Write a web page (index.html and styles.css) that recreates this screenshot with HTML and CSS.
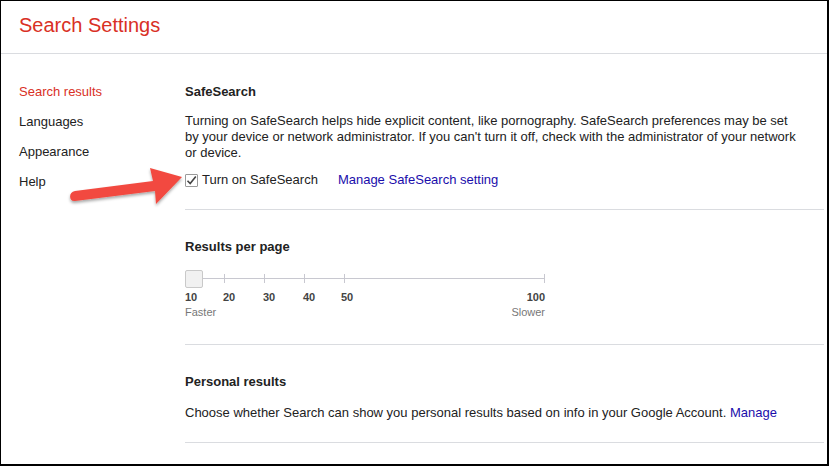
FILE: index.html
```html
<!DOCTYPE html>
<html lang="en">
<head>
    <meta charset="UTF-8">
    <title>Search Settings</title>
    <link rel="stylesheet" href="styles.css">
</head>
<body>

<div class="frame">
    <div class="header">
        <h1>Search Settings</h1>
    </div>

    <div class="layout">
        <!-- Menú lateral -->
        <ul class="nav">
            <li class="active">Search results</li>
            <li>Languages</li>
            <li>Appearance</li>
            <li>Help</li>
        </ul>

        <div class="main">
            <div class="section first">
                <h2>SafeSearch</h2>
                <p>Turning on SafeSearch helps hide explicit content, like pornography. SafeSearch preferences may be set by your device or network administrator. If you can't turn it off, check with the administrator of your network or device.</p>
                <div class="check-row">
                    <label class="check">
                        <span class="box">
                            <svg width="11" height="11" viewBox="0 0 11 11"><path d="M1.5 5.8 L4.2 8.6 L9.8 1.6" fill="none" stroke="#444" stroke-width="1.6"/></svg>
                        </span>
                        Turn on SafeSearch
                    </label>
                    <a href="#">Manage SafeSearch setting</a>
                </div>
            </div>

            <div class="section second">
                <h2>Results per page</h2>
                <div class="slider">
                    <div class="track"></div>
                    <span class="tick" style="left: 39px"></span>
                    <span class="tick" style="left: 79px"></span>
                    <span class="tick" style="left: 119px"></span>
                    <span class="tick" style="left: 159px"></span>
                    <span class="tick" style="left: 359px"></span>
                    <div class="thumb"></div>
                </div>
                <div class="slider-labels">
                    <span style="left: 0">10</span>
                    <span style="left: 38px">20</span>
                    <span style="left: 78px">30</span>
                    <span style="left: 118px">40</span>
                    <span style="left: 156px">50</span>
                    <span class="last">100</span>
                </div>
                <div class="slider-ends">
                    <span>Faster</span>
                    <span>Slower</span>
                </div>
            </div>

            <div class="section third">
                <h2>Personal results</h2>
                <p>Choose whether Search can show you personal results based on info in your Google Account. <a href="#">Manage</a></p>
            </div>
        </div>
    </div>

    <!-- Flecha de anotación -->
    <svg class="arrow" width="130" height="56" viewBox="0 0 130 56">
        <defs>
            <filter id="sh" x="-20%" y="-40%" width="140%" height="180%">
                <feDropShadow dx="0" dy="2" stdDeviation="1.6" flood-color="#000" flood-opacity="0.35"/>
            </filter>
        </defs>
        <path filter="url(#sh)" fill="#f24a3f" d="M12 32 L90 22 L87 9 L119 18 L93 45 L92 32 L12 42 C6 43 5 33 12 32 Z"/>
    </svg>
</div>

</body>
</html>
```

FILE: styles.css
```css
body { margin: 0; font-family: "Liberation Sans", Arial, sans-serif; color: #222; background: #fff; }
.frame { position: relative; width: 829px; height: 466px; box-sizing: border-box; border-top: 1px solid #000; border-left: 1px solid #000; border-right: 2px solid #000; border-bottom: 2px solid #000; overflow: hidden; }

.header { height: 52px; border-bottom: 1px solid #dadce0; }
.header h1 { margin: 0; padding: 12px 0 0 18px; font-size: 20px; font-weight: normal; line-height: 24px; color: #d93025; }

.layout { display: flex; }
.nav { list-style: none; margin: 0; padding: 23px 0 0 18px; width: 166px; }
.nav li { font-size: 13px; line-height: 30px; height: 30px; }
.nav li.active { color: #d93025; }

.main { flex: 1; margin-right: 3px; }
.section { border-bottom: 1px solid #dadce0; }
.section.first { padding: 30px 0 21px; }
.section.second { padding: 29px 0 24px; }
.section.third { padding: 29px 0 21px; }
.section h2 { margin: 0; font-size: 13px; line-height: 16px; font-weight: bold; }
.section p { margin: 14px 0 0; font-size: 13px; line-height: 16px; padding-right: 20px; }
.section.first p { margin-top: 13px; }
.section.third p { margin-top: 15px; }
a { color: #1a0dab; text-decoration: none; }

.check-row { display: flex; align-items: center; margin-top: 11px; font-size: 13px; line-height: 16px; }
.check { display: flex; align-items: center; gap: 4px; margin-right: 20px; }
.box { width: 11px; height: 11px; border: 1px solid #9a9a9a; border-radius: 1px; display: flex; align-items: center; justify-content: center; background: #fff; }

.slider { position: relative; width: 360px; height: 18px; margin-top: 15px; }
.track { position: absolute; left: 0; right: 0; top: 8px; height: 1px; background: #c8c8d0; }
.tick { position: absolute; top: 4px; width: 1px; height: 9px; background: #c8c8d0; }
.thumb { position: absolute; left: 0; top: 0; width: 16px; height: 16px; background: #f1f1f1; border: 1px solid #c9c9c9; border-radius: 2px; }

.slider-labels { position: relative; width: 360px; height: 16px; margin-top: 1px; font-size: 11px; font-weight: bold; line-height: 16px; color: #444; }
.slider-labels span { position: absolute; top: 0; }
.slider-labels span.last { right: 0; }
.slider-ends { display: flex; justify-content: space-between; width: 360px; font-size: 11px; line-height: 15px; color: #777; }

.arrow { position: absolute; left: 62px; top: 158px; }
```
